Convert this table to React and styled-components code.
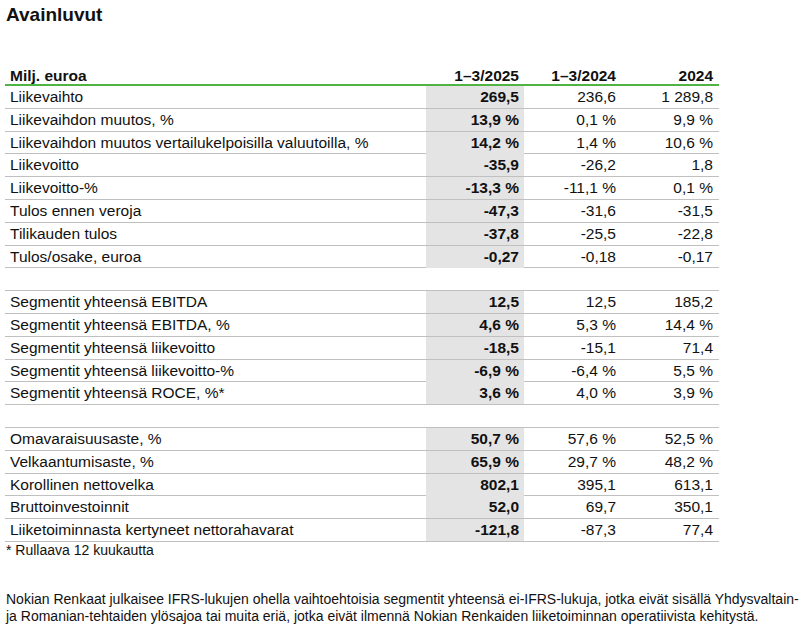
import React from 'react';
import styled, { createGlobalStyle } from 'styled-components';

const GlobalStyle = createGlobalStyle`
  html, body {
    margin: 0;
    padding: 0;
    background: #ffffff;
  }
  body {
    font-family: "Liberation Sans", Arial, sans-serif;
    color: #111111;
  }
`;

const sections = [
  [
    ['Liikevaihto', '269,5', '236,6', '1 289,8'],
    ['Liikevaihdon muutos, %', '13,9 %', '0,1 %', '9,9 %'],
    ['Liikevaihdon muutos vertailukelpoisilla valuutoilla, %', '14,2 %', '1,4 %', '10,6 %'],
    ['Liikevoitto', '-35,9', '-26,2', '1,8'],
    ['Liikevoitto-%', '-13,3 %', '-11,1 %', '0,1 %'],
    ['Tulos ennen veroja', '-47,3', '-31,6', '-31,5'],
    ['Tilikauden tulos', '-37,8', '-25,5', '-22,8'],
    ['Tulos/osake, euroa', '-0,27', '-0,18', '-0,17'],
  ],
  [
    ['Segmentit yhteensä EBITDA', '12,5', '12,5', '185,2'],
    ['Segmentit yhteensä EBITDA, %', '4,6 %', '5,3 %', '14,4 %'],
    ['Segmentit yhteensä liikevoitto', '-18,5', '-15,1', '71,4'],
    ['Segmentit yhteensä liikevoitto-%', '-6,9 %', '-6,4 %', '5,5 %'],
    ['Segmentit yhteensä ROCE, %*', '3,6 %', '4,0 %', '3,9 %'],
  ],
  [
    ['Omavaraisuusaste, %', '50,7 %', '57,6 %', '52,5 %'],
    ['Velkaantumisaste, %', '65,9 %', '29,7 %', '48,2 %'],
    ['Korollinen nettovelka', '802,1', '395,1', '613,1'],
    ['Bruttoinvestoinnit', '52,0', '69,7', '350,1'],
    ['Liiketoiminnasta kertyneet nettorahavarat', '-121,8', '-87,3', '77,4'],
  ],
];

const Page = styled.div`
  padding: 3px 5px 0 5px;
  width: 809px;
  box-sizing: border-box;
`;

const Title = styled.h1`
  margin: 0 0 0 1px;
  font-size: 19px;
  font-weight: bold;
  line-height: 23px;
`;

const Table = styled.div`
  margin-top: 41px;
  width: 714px;
`;

const Row = styled.div`
  display: grid;
  grid-template-columns: 421px 98px 97px 98px;
  height: ${(p) => (p.$head ? '19px' : '22.8px')};
  box-sizing: border-box;
  border-bottom: ${(p) => (p.$head ? '2px solid #4fb443' : '1px solid #c0c0c0')};
  font-size: 15.5px;
  line-height: ${(p) => (p.$head ? '17px' : '22px')};
`;

const Label = styled.div`
  padding-left: 5px;
  font-weight: ${(p) => (p.$bold ? 'bold' : 'normal')};
  white-space: nowrap;
`;

const Cell = styled.div`
  text-align: right;
  padding-right: ${(p) => (p.$last ? '6px' : '5px')};
  font-weight: ${(p) => (p.$bold ? 'bold' : 'normal')};
  background: ${(p) => (p.$shade ? '#e4e4e4' : 'transparent')};
  white-space: nowrap;
`;

const Note = styled.div`
  font-size: 14px;
  line-height: 17px;
  padding-left: 1px;
`;

const Footer = styled.p`
  margin: 32px 0 0 1px;
  font-size: 14px;
  line-height: 17px;
  white-space: nowrap;
`;

export default function App() {
  return (
    <Page>
      <GlobalStyle />
      <Title>Avainluvut</Title>
      <Table>
        <Row $head>
          <Label $bold>Milj. euroa</Label>
          <Cell $bold>1–3/2025</Cell>
          <Cell $bold>1–3/2024</Cell>
          <Cell $bold $last>2024</Cell>
        </Row>
        {sections.map((rows, i) => (
          <React.Fragment key={i}>
            {i > 0 && (
              <Row>
                <Label />
                <Cell />
                <Cell />
                <Cell $last />
              </Row>
            )}
            {rows.map(([label, a, b, c]) => (
              <Row key={label}>
                <Label>{label}</Label>
                <Cell $bold $shade>{a}</Cell>
                <Cell>{b}</Cell>
                <Cell $last>{c}</Cell>
              </Row>
            ))}
          </React.Fragment>
        ))}
      </Table>
      <Note>* Rullaava 12 kuukautta</Note>
      <Footer>
        Nokian Renkaat julkaisee IFRS-lukujen ohella vaihtoehtoisia segmentit yhteensä ei-IFRS-lukuja, jotka eivät sisällä Yhdysvaltain-
        <br />
        ja Romanian-tehtaiden ylösajoa tai muita eriä, jotka eivät ilmennä Nokian Renkaiden liiketoiminnan operatiivista kehitystä.
      </Footer>
    </Page>
  );
}
